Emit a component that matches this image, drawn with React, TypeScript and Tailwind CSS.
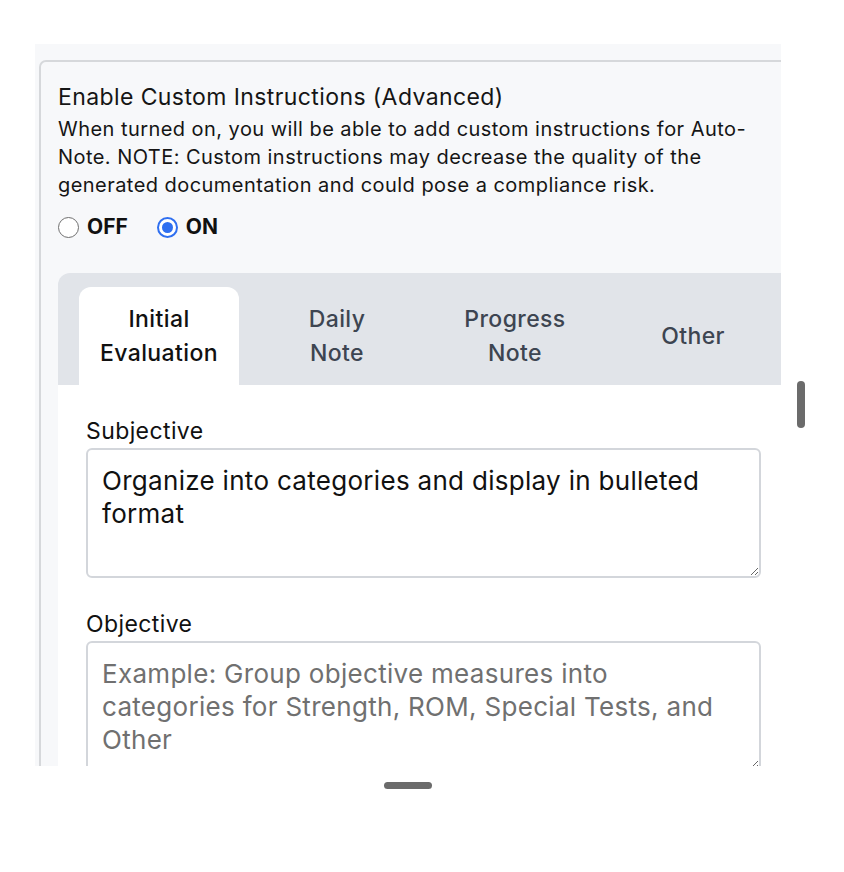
import type { ReactNode } from 'react';

const TABS = [
  { label: ['Initial', 'Evaluation'], active: true },
  { label: ['Daily', 'Note'] },
  { label: ['Progress', 'Note'] },
  { label: ['Other'] }
];

function Radio({ label, checked }: { label: string; checked?: boolean }) {
  return (
    <label className="flex items-center gap-[8px]">
      {checked ? (
        <span className="h-[21px] w-[21px] rounded-full border-2 border-[#2f6ff0] bg-white flex items-center justify-center">
          <span className="h-[11px] w-[11px] rounded-full bg-[#2f6ff0]" />
        </span>
      ) : (
        <span className="h-[21px] w-[21px] rounded-full border-[1.5px] border-[#6f6f6f] bg-white" />
      )}
      <span className="text-[21px] font-bold text-[#111]">{label}</span>
    </label>
  );
}

function Field({
  label,
  value,
  placeholder,
  children
}: {
  label: string;
  value?: string;
  placeholder?: string;
  children?: ReactNode;
}) {
  return (
    <div className="mb-[32px]">
      <div className="text-[23px] tracking-[0.4px] leading-[28px] text-[#111] mb-[3px]">{label}</div>
      <textarea
        readOnly
        value={value ?? ''}
        placeholder={placeholder}
        className="block w-[675px] h-[130px] rounded-[6px] border-2 border-[#d3d6db] bg-white px-[14px] pt-[14px] text-[26px] tracking-[0.3px] leading-[33px] text-[#111] placeholder:text-[#707070] outline-none"
      />
      {children}
    </div>
  );
}

export default function App() {
  return (
    <div className="relative w-[844px] h-[872px] bg-white font-['Inter',sans-serif]">
      {/* clipped scroll viewport */}
      <div className="ml-[35px] pt-[44px]">
        <div className="w-[746px] h-[722px] overflow-hidden bg-[#f7f8fa]">
          <div className="mt-[16px] ml-[4px] w-[800px] border-2 border-[#d6d8db] rounded-[7px] bg-[#f7f8fa] pl-[17px] pt-[21px]">
            <div className="text-[23px] tracking-[0.4px] leading-[28px] text-[#151515]">
              Enable Custom Instructions (Advanced)
            </div>
            <p className="mt-[4px] w-[700px] text-[20px] tracking-[0.45px] leading-[28px] text-[#151515]">
              When turned on, you will be able to add custom instructions for Auto-Note. NOTE: Custom
              instructions may decrease the quality of the generated documentation and could pose a
              compliance risk.
            </p>
            <div className="mt-[14px] h-[28px] flex items-center gap-[29px]">
              <Radio label="OFF" />
              <Radio label="ON" checked />
            </div>

            <div className="mt-[32px] rounded-tl-[12px] bg-[#e1e4e9] pl-[21px] pt-[14px] flex gap-[18px]">
              {TABS.map((t) => (
                <div
                  key={t.label.join(' ')}
                  className={`w-[160px] h-[98px] flex flex-col items-center justify-center text-[23px] tracking-[0.4px] leading-[34px] font-medium rounded-t-[12px] ${
                    t.active ? 'bg-white text-[#111]' : 'text-[#3d4551]'
                  }`}
                >
                  {t.label.map((l) => (
                    <span key={l}>{l}</span>
                  ))}
                </div>
              ))}
            </div>

            <div className="bg-white pl-[28px] pt-[32px] pb-[40px]">
              <Field
                label="Subjective"
                value="Organize into categories and display in bulleted format"
              />
              <Field
                label="Objective"
                placeholder="Example: Group objective measures into categories for Strength, ROM, Special Tests, and Other"
              />
            </div>
          </div>
        </div>
      </div>

      {/* overlay scroll indicators */}
      <div className="absolute left-[797px] top-[381px] h-[47px] w-[8px] rounded-full bg-[#6b6b6b]" />
      <div className="absolute left-[384px] top-[782px] h-[7px] w-[48px] rounded-full bg-[#6b6b6b]" />
    </div>
  );
}
